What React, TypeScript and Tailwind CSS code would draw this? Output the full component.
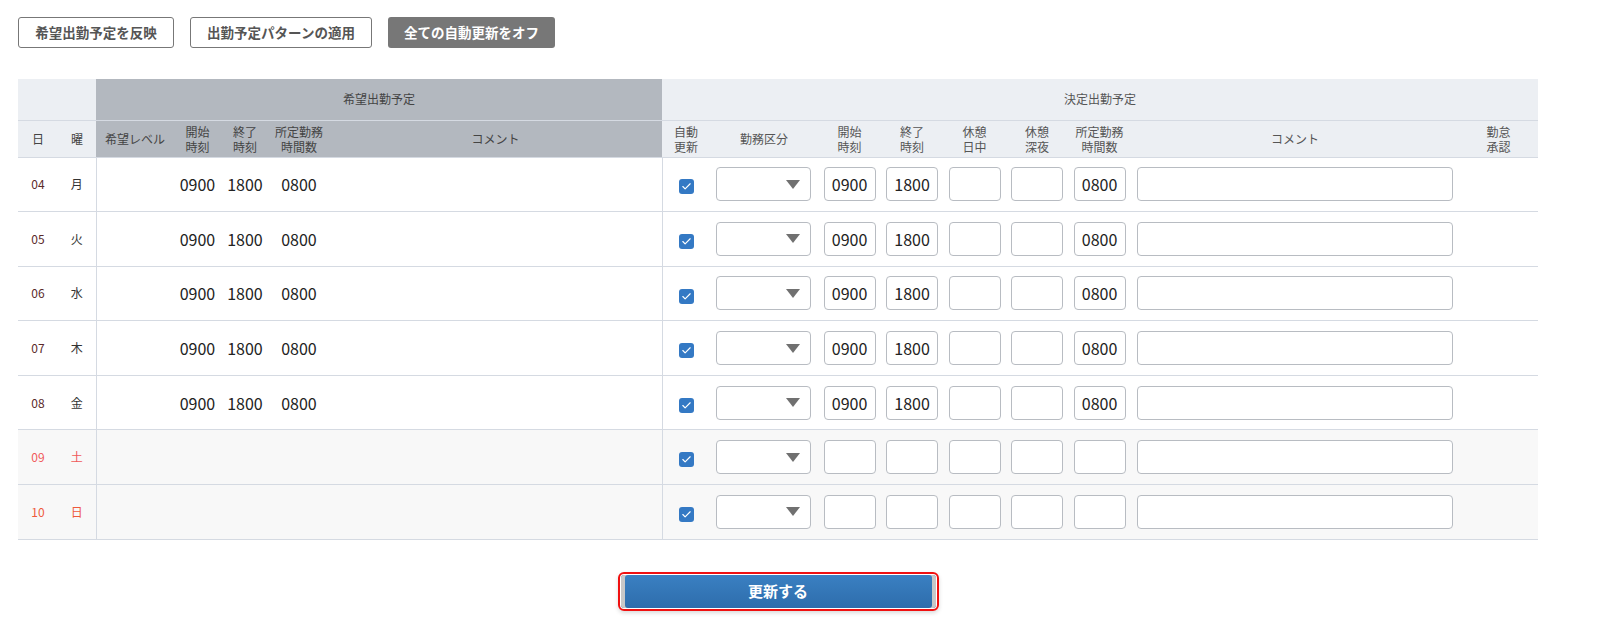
import { Check } from 'lucide-react';

type Row = { day: string; dow: string; kind: 'weekday' | 'sat' | 'sun'; filled: boolean };

const rows: Row[] = [
  { day: '04', dow: '月', kind: 'weekday', filled: true },
  { day: '05', dow: '火', kind: 'weekday', filled: true },
  { day: '06', dow: '水', kind: 'weekday', filled: true },
  { day: '07', dow: '木', kind: 'weekday', filled: true },
  { day: '08', dow: '金', kind: 'weekday', filled: true },
  { day: '09', dow: '土', kind: 'sat', filled: false },
  { day: '10', dow: '日', kind: 'sun', filled: false },
];

function TimeBox({ value }: { value?: string }) {
  return (
    <div className="mx-auto flex h-[34px] w-[52px] items-center justify-center rounded-[4px] border border-[#b8bcc2] bg-white text-[16px] text-[#222]">
      {value}
    </div>
  );
}

function HeadCell({ lines, className = '' }: { lines: string[]; className?: string }) {
  return (
    <th className={`px-0 text-center align-middle text-[12px] font-normal leading-[15px] ${className}`}>
      {lines.map((l) => (
        <div key={l}>{l}</div>
      ))}
    </th>
  );
}

export default function App() {
  return (
    <div
      className="min-h-screen bg-white px-[18px] pt-[17px] text-[#333]"
      style={{ fontFamily: '"Noto Sans CJK JP", "Noto Sans", sans-serif' }}
    >
      {/* Toolbar */}
      <div className="flex gap-[16px]">
        <button className="h-[31px] w-[156px] rounded-[3px] border border-[#777] bg-white text-[13.5px] font-bold text-[#555]">
          希望出勤予定を反映
        </button>
        <button className="h-[31px] w-[182px] rounded-[3px] border border-[#777] bg-white text-[13.5px] font-bold text-[#555]">
          出勤予定パターンの適用
        </button>
        <button className="h-[31px] w-[167px] rounded-[3px] bg-[#777] text-[13.5px] font-bold text-white">
          全ての自動更新をオフ
        </button>
      </div>

      {/* Table */}
      <table className="mt-[31px] w-[1520px] table-fixed border-collapse">
        <colgroup>
          <col className="w-[40px]" />
          <col className="w-[38px]" />
          <col className="w-[78px]" />
          <col className="w-[47px]" />
          <col className="w-[48px]" />
          <col className="w-[60px]" />
          <col className="w-[333px]" />
          <col className="w-[48px]" />
          <col className="w-[108px]" />
          <col className="w-[63px]" />
          <col className="w-[62px]" />
          <col className="w-[63px]" />
          <col className="w-[62px]" />
          <col className="w-[63px]" />
          <col className="w-[328px]" />
          <col className="w-[79px]" />
        </colgroup>
        <thead>
          <tr className="h-[41px] border-b border-[#d5dae2]">
            <th colSpan={2} className="bg-[#eceff3]" />
            <th colSpan={5} className="bg-[#b3b8bf] text-center text-[12px] font-normal text-[#444]">
              希望出勤予定
            </th>
            <th colSpan={9} className="bg-[#eceff3] text-center text-[12px] font-normal text-[#555]">
              決定出勤予定
            </th>
          </tr>
          <tr className="h-[37px] border-b border-[#d5dae2]">
            <HeadCell lines={['日']} className="bg-[#eceff3] text-[#444]" />
            <HeadCell lines={['曜']} className="bg-[#eceff3] text-[#444]" />
            <HeadCell lines={['希望レベル']} className="bg-[#b3b8bf] text-[#444]" />
            <HeadCell lines={['開始', '時刻']} className="bg-[#b3b8bf] text-[#444]" />
            <HeadCell lines={['終了', '時刻']} className="bg-[#b3b8bf] text-[#444]" />
            <HeadCell lines={['所定勤務', '時間数']} className="bg-[#b3b8bf] text-[#444]" />
            <HeadCell lines={['コメント']} className="bg-[#b3b8bf] text-[#444]" />
            <HeadCell lines={['自動', '更新']} className="bg-[#eceff3] text-[#555]" />
            <HeadCell lines={['勤務区分']} className="bg-[#eceff3] text-[#555]" />
            <HeadCell lines={['開始', '時刻']} className="bg-[#eceff3] text-[#555]" />
            <HeadCell lines={['終了', '時刻']} className="bg-[#eceff3] text-[#555]" />
            <HeadCell lines={['休憩', '日中']} className="bg-[#eceff3] text-[#555]" />
            <HeadCell lines={['休憩', '深夜']} className="bg-[#eceff3] text-[#555]" />
            <HeadCell lines={['所定勤務', '時間数']} className="bg-[#eceff3] text-[#555]" />
            <HeadCell lines={['コメント']} className="bg-[#eceff3] text-[#555]" />
            <HeadCell lines={['勤怠', '承認']} className="bg-[#eceff3] text-[#555]" />
          </tr>
        </thead>
        <tbody>
          {rows.map((r) => {
            const bg = r.kind === 'weekday' ? 'bg-white' : 'bg-[#f8f8f8]';
            const dayColor =
              r.kind === 'sat' ? 'text-[#f05a5a]' : r.kind === 'sun' ? 'text-[#ee5a3c]' : 'text-[#5a2a2a]';
            const dowColor =
              r.kind === 'sat' ? 'text-[#f05a5a]' : r.kind === 'sun' ? 'text-[#ee5a3c]' : 'text-[#333]';
            return (
              <tr key={r.day} className={`h-[54.6px] border-b border-[#d5dae2] ${bg}`}>
                <td className={`text-center text-[12px] ${dayColor}`}>{r.day}</td>
                <td className={`border-r border-[#d5dae2] text-center text-[12px] ${dowColor}`}>{r.dow}</td>
                <td />
                <td className="text-center text-[16px] text-[#222]">{r.filled ? '0900' : ''}</td>
                <td className="text-center text-[16px] text-[#222]">{r.filled ? '1800' : ''}</td>
                <td className="text-center text-[16px] text-[#222]">{r.filled ? '0800' : ''}</td>
                <td className="border-r border-[#d5dae2]" />
                <td className="text-center">
                  <span className="inline-flex h-[15px] w-[15px] items-center justify-center rounded-[3px] bg-[#3479c4] align-middle">
                    <Check className="h-[11px] w-[11px] text-white" strokeWidth={2.5} />
                  </span>
                </td>
                <td className="px-[6px]">
                  <div className="flex h-[34px] w-[95px] items-center justify-end rounded-[4px] border border-[#b8bcc2] bg-white pr-[10px]">
                    <svg width="14" height="9" viewBox="0 0 14 9">
                      <path d="M0 0 L14 0 L7 9 Z" fill="#707070" />
                    </svg>
                  </div>
                </td>
                <td>
                  <TimeBox value={r.filled ? '0900' : ''} />
                </td>
                <td>
                  <TimeBox value={r.filled ? '1800' : ''} />
                </td>
                <td>
                  <TimeBox />
                </td>
                <td>
                  <TimeBox />
                </td>
                <td>
                  <TimeBox value={r.filled ? '0800' : ''} />
                </td>
                <td className="pl-[6px]">
                  <div className="h-[34px] w-[316px] rounded-[4px] border border-[#b8bcc2] bg-white" />
                </td>
                <td />
              </tr>
            );
          })}
        </tbody>
      </table>

      {/* Submit */}
      <div className="flex w-[1520px] justify-center pt-[32px]">
        <div className="rounded-[6px] border-2 border-[#f01010] p-[1px] shadow-[0_2px_4px_rgba(0,0,0,0.15)]">
          <button className="h-[33px] w-[315px] rounded-[3px] bg-gradient-to-b from-[#3a80c2] to-[#2e6dac] px-[5px] text-[15px] font-bold text-white shadow-[inset_4px_0_0_#c8c8c8,inset_-4px_0_0_#c8c8c8]">
            更新する
          </button>
        </div>
      </div>
    </div>
  );
}
